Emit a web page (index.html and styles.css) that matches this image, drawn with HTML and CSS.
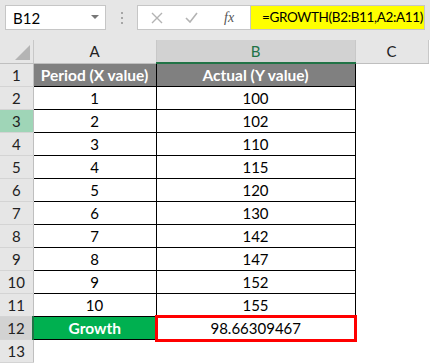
FILE: index.html
```html
<!DOCTYPE html>
<html lang="en">
<head>
    <meta charset="UTF-8">
    <title>GROWTH</title>
    <link rel="stylesheet" href="styles.css">
</head>
<body>
    <div class="formula-bar">
        <div class="name-box">
            <span>B12</span>
            <svg class="caret" width="8" height="5" viewBox="0 0 8 5"><path d="M0 0h8L4 4z" fill="#777"/></svg>
        </div>
        <div class="grip"><i></i><i></i><i></i></div>
        <div class="func-box">
            <svg width="12" height="12" viewBox="0 0 12 12"><path d="M1 1l10 10M11 1L1 11" stroke="#b3b3b3" stroke-width="1.4"/></svg>
            <svg width="13" height="11" viewBox="0 0 13 11"><path d="M1 6l4 4 7-9" stroke="#b3b3b3" stroke-width="1.6" fill="none"/></svg>
            <span class="fx">fx</span>
        </div>
        <div class="formula">=GROWTH(B2:B11,A2:A11)</div>
    </div>

    <table class="sheet">
        <colgroup>
            <col class="c-row"><col class="c-a"><col class="c-b"><col class="c-c">
        </colgroup>
        <thead>
            <tr>
                <th class="corner"><span class="tri"></span></th>
                <th class="col-head">A</th>
                <th class="col-head sel">B</th>
                <th class="col-head">C</th>
            </tr>
        </thead>
        <tbody id="rows"></tbody>
    </table>

    <script>
        var data = [
            [1, 100], [2, 102], [3, 110], [4, 115], [5, 120],
            [6, 130], [7, 142], [8, 147], [9, 152], [10, 155]
        ];
        var body = document.getElementById('rows');
        var html = '<tr><th class="row-head">1</th><td class="hdr box">Period (X value)</td><td class="hdr box">Actual (Y value)</td><td></td></tr>';
        data.forEach(function (d, i) {
            var n = i + 2;
            html += '<tr><th class="row-head' + (n === 3 ? ' mark' : '') + '">' + n + '</th>' +
                '<td class="box">' + d[0] + '</td><td class="box">' + d[1] + '</td><td></td></tr>';
        });
        html += '<tr><th class="row-head sel">12</th><td class="growth">Growth</td><td class="result"><div>98.66309467</div></td><td></td></tr>';
        html += '<tr><th class="row-head">13</th><td></td><td></td><td></td></tr>';
        body.innerHTML = html;
    </script>
</body>
</html>
```

FILE: styles.css
```css
body {
    margin: 0;
    width: 430px;
    height: 363px;
    overflow: hidden;
    background: #fff;
    font-family: Lato, "Liberation Sans", sans-serif;
    font-size: 15px;
    color: #000;
}
.formula-bar {
    display: flex;
    align-items: center;
    height: 40px;
    padding: 0 5px 5px;
    box-sizing: border-box;
    background: #e6e6e6;
}
.formula-bar > div {
    height: 25px;
    box-sizing: border-box;
}
.name-box {
    width: 101px;
    background: #fff;
    border: 1px solid #c6c6c6;
    display: flex;
    align-items: center;
    justify-content: space-between;
    padding: 0 6px 0 7px;
    font-size: 15px;
}
.grip {
    width: 31px;
    display: flex;
    flex-direction: column;
    align-items: center;
    justify-content: center;
    gap: 3px;
}
.grip i {
    width: 2px;
    height: 2px;
    background: #a6a6a6;
}
.func-box {
    width: 113px;
    background: #fff;
    border: 1px solid #c6c6c6;
    border-right: none;
    display: flex;
    align-items: center;
    padding-left: 13px;
    gap: 22px;
}
.fx {
    font-family: "Liberation Serif", serif;
    font-style: italic;
    font-size: 14px;
    color: #555;
    margin-left: 4px;
}
.formula {
    width: 175px;
    background: #ffff00;
    border: 1px solid #c6c6c6;
    padding-left: 11px;
    line-height: 23px;
    font-size: 13.5px;
    letter-spacing: -0.35px;
    white-space: nowrap;
    overflow: hidden;
}
.sheet {
    border-collapse: collapse;
    table-layout: fixed;
    width: 428px;
}
.c-row { width: 33px; }
.c-a { width: 123px; }
.c-b { width: 199px; }
.c-c { width: 73px; }
.sheet th, .sheet td {
    height: 22px;
    padding: 0;
    text-align: center;
    font-weight: normal;
    line-height: 22px;
}
.sheet thead th {
    background: #e6e6e6;
    border-right: 1px solid #c8c8c8;
    border-bottom: 1px solid #bfbfbf;
    color: #222;
}
.corner {
    position: relative;
}
.tri {
    position: absolute;
    right: 3px;
    bottom: 3px;
    width: 0;
    height: 0;
    border-left: 15px solid transparent;
    border-bottom: 15px solid #b4b4b4;
}
.sheet thead th.sel {
    background: #d2d2d2;
    color: #217346;
    border-bottom: 2px solid #217346;
}
.row-head {
    background: #e6e6e6;
    color: #222;
    border-right: 1px solid #bfbfbf;
    border-bottom: 1px solid #d4d4d4;
}
.row-head.mark {
    background: #9fd5b7;
}
.row-head.sel {
    background: #d2d2d2;
    border-right: 2px solid #217346;
}
.box {
    border: 1px solid #000;
}
.sheet .hdr {
    background: #808080;
    color: #fff;
    font-weight: bold;
    font-size: 15.5px;
}
.sheet .growth {
    background: #00b050;
    color: #fff;
    font-weight: bold;
    font-size: 15.5px;
    border: 1px solid #000;
}
.result {
    position: relative;
}
.result div {
    position: absolute;
    left: -2px;
    right: -2px;
    top: -2px;
    bottom: -2px;
    border: 3px solid #ff0000;
    line-height: 20px;
}
```
